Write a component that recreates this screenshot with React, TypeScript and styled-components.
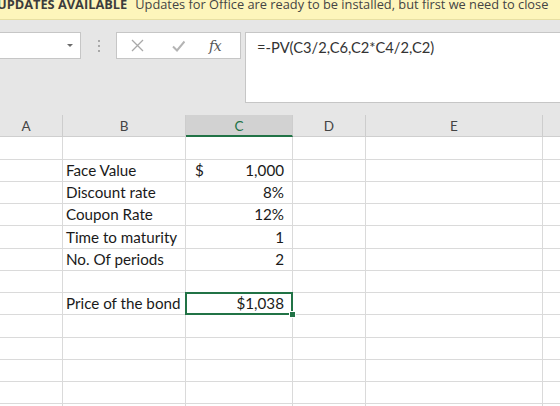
import React from "react";
import styled, { createGlobalStyle } from "styled-components";

const Global = createGlobalStyle`
  html, body { margin: 0; padding: 0; background: #e6e6e6; }
  body { width: 560px; height: 406px; overflow: hidden; }
  #root { width: 560px; height: 406px; overflow: hidden; }
`;

const Page = styled.div`
  width: 560px;
  height: 406px;
  overflow: hidden;
  display: flex;
  flex-direction: column;
  background: #e6e6e6;
`;

const Banner = styled.div`
  height: 19px;
  flex: none;
  background: #fdf5bb;
  border-bottom: 1px solid #e7dfa3;
  overflow: hidden;
  display: flex;
  align-items: flex-start;
  white-space: nowrap;
  font-family: "Open Sans", "Noto Sans", sans-serif;
  font-size: 12.8px;
  line-height: 14px;
  color: #444;
`;

const BannerText = styled.div`
  margin-top: -3px;
  margin-left: -3px;
  display: flex;
  gap: 8px;
`;

const BannerTitle = styled.span`
  font-weight: 700;
  color: #3c3c3c;
`;

const FormulaArea = styled.div`
  flex: none;
  display: flex;
  align-items: flex-start;
  padding: 12px 0 12px 0;
`;

const NameBox = styled.div`
  width: 81px;
  height: 27px;
  box-sizing: border-box;
  background: #fff;
  border: 1px solid #c6c6c6;
  border-left: none;
  display: flex;
  align-items: center;
  justify-content: flex-end;
  padding-right: 7px;
`;

const Caret = styled.div`
  width: 0;
  height: 0;
  border-left: 3.5px solid transparent;
  border-right: 3.5px solid transparent;
  border-top: 3.5px solid #6a6a6a;
`;

const Grip = styled.div`
  width: 35px;
  height: 27px;
  display: flex;
  flex-direction: column;
  align-items: center;
  justify-content: center;
  gap: 3px;
`;

const Dot = styled.span`
  width: 2px;
  height: 2px;
  background: #a8a8a8;
`;

const FxButtons = styled.div`
  width: 125px;
  height: 27px;
  box-sizing: border-box;
  background: #fff;
  border: 1px solid #c6c6c6;
  display: flex;
  align-items: center;
  padding-left: 14px;
`;

const IconSlot = styled.div<{ $w: number }>`
  width: ${(p) => p.$w}px;
  display: flex;
  align-items: center;
`;

const FxLabel = styled.span`
  font-family: "DejaVu Serif", "Liberation Serif", serif;
  font-style: italic;
  font-size: 14px;
  color: #555;
  letter-spacing: -0.5px;
`;

const FormulaInput = styled.div`
  margin-left: 4px;
  flex: 1;
  height: 71px;
  box-sizing: border-box;
  background: #fff;
  border: 1px solid #c6c6c6;
  border-right: none;
  padding: 5px 0 0 11px;
  font-family: "Lato", "Open Sans", sans-serif;
  font-size: 14.7px;
  line-height: 18px;
  color: #333;
  white-space: nowrap;
`;

const SheetClip = styled.div`
  flex: 1;
  overflow: hidden;
`;

const Grid = styled.div`
  margin-left: -10px;
  display: grid;
  grid-template-columns: 73px 123px 107px 73px 177px 60px;
  grid-auto-rows: 22.25px;
  font-family: "Lato", "Open Sans", sans-serif;
  font-size: 15.2px;
  color: #1a1a1a;
  background: #fff;
`;

const HeaderCell = styled.div<{ $active?: boolean }>`
  height: 22px;
  box-sizing: border-box;
  background: ${(p) => (p.$active ? "#d2d2d2" : "#e6e6e6")};
  border-right: 1px solid #cdcdcd;
  border-bottom: ${(p) => (p.$active ? "2px solid #217346" : "1px solid #cfcfcf")};
  display: flex;
  align-items: center;
  justify-content: center;
  font-size: 13.5px;
  color: ${(p) => (p.$active ? "#217346" : "#444")};
  padding-top: 1px;
`;

const Cell = styled.div<{ $align?: "left" | "right" | "split" }>`
  position: relative;
  box-sizing: border-box;
  border-right: 1px solid #dadada;
  border-bottom: 1px solid #dadada;
  display: flex;
  align-items: flex-end;
  justify-content: ${(p) =>
    p.$align === "right" ? "flex-end" : p.$align === "split" ? "space-between" : "flex-start"};
  padding: 0 8px 1px ${(p) => (p.$align === "split" ? "9px" : "3px")};
  white-space: nowrap;
  line-height: 20px;
`;

const Selection = styled.div`
  position: absolute;
  left: -1px;
  top: -1px;
  right: -1px;
  bottom: -1px;
  border: 2px solid #217346;
  pointer-events: none;
`;

const Handle = styled.div`
  position: absolute;
  right: -5px;
  bottom: -5px;
  width: 7px;
  height: 7px;
  background: #217346;
  border: 1px solid #fff;
  box-sizing: border-box;
  z-index: 2;
`;

type Row = { b?: string; c?: string; cSplit?: string; sel?: boolean };

const rows: Row[] = [
  {},
  { b: "Face Value", cSplit: "$", c: "1,000" },
  { b: "Discount rate", c: "8%" },
  { b: "Coupon Rate", c: "12%" },
  { b: "Time to maturity", c: "1" },
  { b: "No. Of periods", c: "2" },
  {},
  { b: "Price of the bond", c: "$1,038", sel: true },
  {},
  {},
  {},
  {},
  {},
];

const cols = ["A", "B", "C", "D", "E", ""];

export default function App() {
  return (
    <Page>
      <Global />
      <Banner>
        <BannerText>
          <BannerTitle>UPDATES AVAILABLE</BannerTitle>
          <span>Updates for Office are ready to be installed, but first we need to close</span>
        </BannerText>
      </Banner>
      <FormulaArea>
        <NameBox>
          <Caret />
        </NameBox>
        <Grip>
          <Dot />
          <Dot />
          <Dot />
        </Grip>
        <FxButtons>
          <IconSlot $w={41}>
            <svg width="13" height="13" viewBox="0 0 13 13">
              <path d="M1 1 L12 12 M12 1 L1 12" stroke="#a9a9a9" strokeWidth="1.3" fill="none" />
            </svg>
          </IconSlot>
          <IconSlot $w={37}>
            <svg width="13" height="12" viewBox="0 0 13 12">
              <path d="M1 6.5 L5 10.5 L12.5 1.5" stroke="#b4b4b4" strokeWidth="2" fill="none" />
            </svg>
          </IconSlot>
          <IconSlot $w={20}>
            <FxLabel>fx</FxLabel>
          </IconSlot>
        </FxButtons>
        <FormulaInput>=-PV(C3/2,C6,C2*C4/2,C2)</FormulaInput>
      </FormulaArea>
      <SheetClip>
        <Grid>
          {cols.map((c) => (
            <HeaderCell key={"h" + c} $active={c === "C"}>
              {c}
            </HeaderCell>
          ))}
          {rows.map((r, i) => (
            <React.Fragment key={i}>
              <Cell />
              <Cell>{r.b}</Cell>
              <Cell $align={r.cSplit ? "split" : "right"}>
                {r.cSplit && <span>{r.cSplit}</span>}
                {r.c && <span>{r.c}</span>}
                {r.sel && (
                  <Selection>
                    <Handle />
                  </Selection>
                )}
              </Cell>
              <Cell />
              <Cell />
              <Cell />
            </React.Fragment>
          ))}
        </Grid>
      </SheetClip>
    </Page>
  );
}
